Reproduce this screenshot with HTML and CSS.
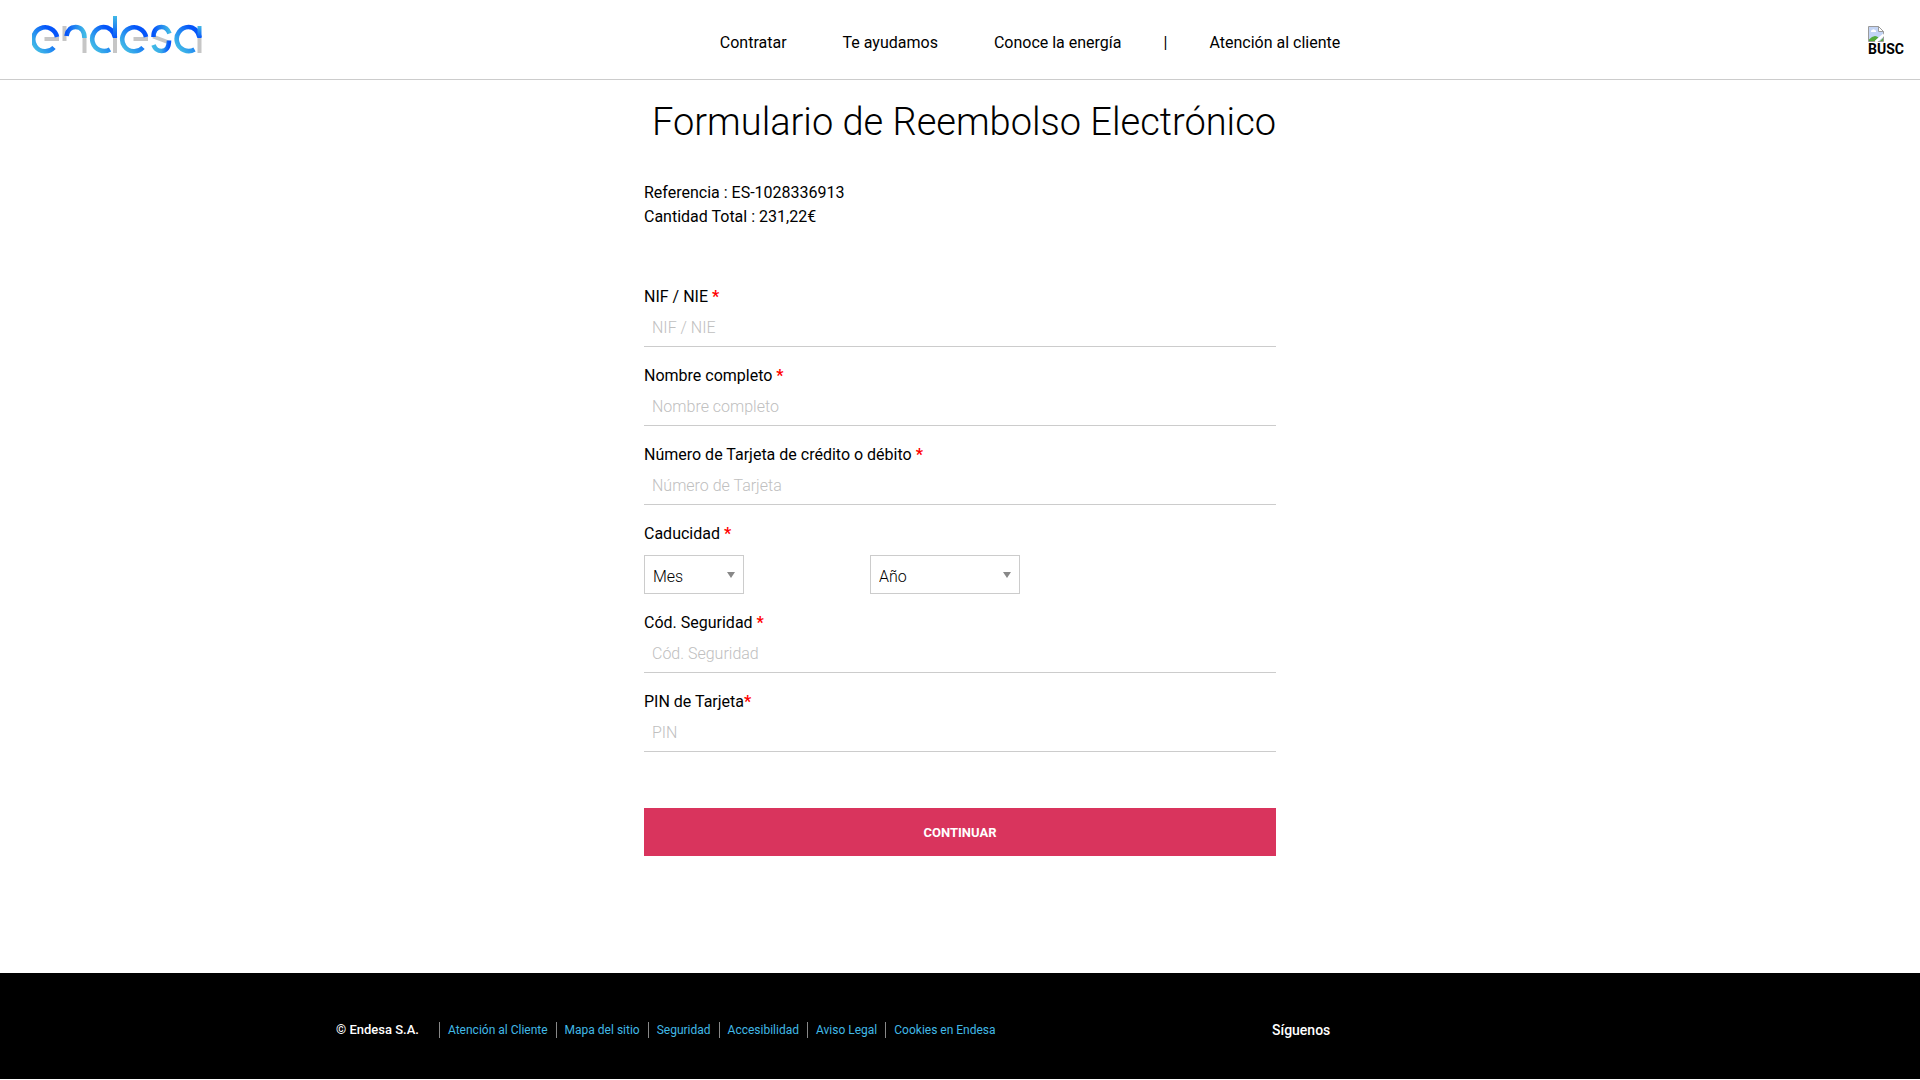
FILE: index.html
```html
<!DOCTYPE html>
<html lang="es">
<head>
<meta charset="utf-8">
<meta name="viewport" content="width=device-width, initial-scale=1">
<title>Formulario de Reembolso Electrónico</title>
<link rel="stylesheet" href="styles.css">
</head>
<body>
<header class="header">
  <a class="logo" href="#" aria-label="endesa">
    <svg width="170" height="38" viewBox="32 16 170 38" fill="none" stroke-width="4.600">
      <defs>
        <linearGradient id="ring" x1="0.1" y1="0.9" x2="0.9" y2="0.2">
          <stop offset="0" stop-color="#41b9e6"/><stop offset="0.4" stop-color="#2690f0"/><stop offset="0.9" stop-color="#0555fa"/>
        </linearGradient>
        <linearGradient id="arch" x1="0" y1="0.5" x2="1" y2="0.5">
          <stop offset="0" stop-color="#0555fa"/><stop offset="1" stop-color="#41b9e6"/>
        </linearGradient>
        <linearGradient id="hook" x1="0" y1="0.5" x2="1" y2="0.5">
          <stop offset="0" stop-color="#41b9e6"/><stop offset="0.5" stop-color="#38aae9"/><stop offset="1" stop-color="#0555fa"/>
        </linearGradient>
        <linearGradient id="stem" x1="0" y1="0" x2="0" y2="1">
          <stop offset="0" stop-color="#41b9e6"/><stop offset="1" stop-color="#0555fa"/>
        </linearGradient>
      </defs>
      <path stroke="#c6c6c6" stroke-width="4" d="M44.500 39H59M64.500 26V41M84.500 38V53M115 38V53M133.500 39H148M153 36.500L169 42.500M199.500 38V53"/>
      <path stroke="url(#ring)" d="M57 37A12 12 0 1 0 54 47.500"/>
      <path stroke="url(#arch)" d="M66.500 36C67.500 29.500 71 27 75.500 27C81 27 84.500 31 84.500 38"/>
      <path stroke="url(#ring)" d="M115 37.500C114 31 109 27 103.500 27A12 12 0 1 0 110 49.500"/>
      <path fill="url(#stem)" d="M113 16H117V38H113Z"/>
      <path stroke="url(#ring)" d="M146 37A12 12 0 1 0 143 47.500"/>
      <path stroke="url(#arch)" d="M153.500 37C153.500 30 157 27 161.500 27C165.500 27 168 29.500 169.500 33.500"/>
      <path stroke="url(#hook)" d="M153.500 45C155 49 157.500 51 161.500 51C166 51 169 47.500 169 40.500"/>
      <path stroke="url(#ring)" d="M199.500 37.500C198.500 31 193.500 27 188.500 27A12 12 0 1 0 194.500 49.500"/>
      <path fill="url(#stem)" d="M197.500 26H201.500V38H197.500Z"/>
    </svg>
  </a>
  <nav class="nav">
    <a href="#">Contratar</a>
    <a href="#">Te ayudamos</a>
    <a href="#">Conoce la energía</a>
    <span class="nav-sep">|</span>
    <a href="#">Atención al cliente</a>
  </nav>
  <button class="search" type="button">
    <svg width="16" height="16" viewBox="0 0 16 16">
      <path fill="#c3d4f5" stroke="#9a9a9a" d="M.5 .5H10.500L15.500 5.500V15.500H.5Z"/>
      <path fill="#fff" stroke="#9a9a9a" d="M10.500 .5V5.500H15.500Z"/>
      <path fill="#fff" d="M3 6a1.500 1.500 0 0 1 1-2a2 2 0 0 1 3 0a1.500 1.500 0 0 1 1 2Z"/>
      <path fill="#54ab3a" d="M1 15V13.500Q4 10 7 10Q9 10 10.500 11.500L7 15ZM12 15L15 12V15Z"/>
      <path stroke="#fff" stroke-width="2.500" d="M7.500 16L16 8.500"/>
    </svg>
    <span>BUSC</span>
  </button>
</header>

<main class="main">
  <h1 class="title">Formulario de Reembolso Electrónico</h1>
  <div class="summary">
    <p>Referencia : ES-1028336913</p>
    <p>Cantidad Total : 231,22€</p>
  </div>
  <form class="form">
    <div class="field">
      <label for="nif">NIF / NIE <span class="req">*</span></label>
      <input id="nif" type="text" placeholder="NIF / NIE">
    </div>
    <div class="field">
      <label for="nombre">Nombre completo <span class="req">*</span></label>
      <input id="nombre" type="text" placeholder="Nombre completo">
    </div>
    <div class="field">
      <label for="tarjeta">Número de Tarjeta de crédito o débito <span class="req">*</span></label>
      <input id="tarjeta" type="text" placeholder="Número de Tarjeta">
    </div>
    <div class="field">
      <label for="mes">Caducidad <span class="req">*</span></label>
      <div class="expiry">
        <select id="mes" class="month"><option>Mes</option></select>
        <select class="year" aria-label="Año"><option>Año</option></select>
      </div>
    </div>
    <div class="field">
      <label for="cvv">Cód. Seguridad <span class="req">*</span></label>
      <input id="cvv" type="text" placeholder="Cód. Seguridad">
    </div>
    <div class="field">
      <label for="pin">PIN de Tarjeta<span class="req">*</span></label>
      <input id="pin" type="text" placeholder="PIN">
    </div>
    <button class="submit" type="submit">CONTINUAR</button>
  </form>
</main>

<footer class="footer">
  <div class="footer-inner">
    <div class="legal">
      <span class="copy">© Endesa S.A.</span>
      <ul class="links">
        <li><a href="#">Atención al Cliente</a></li>
        <li><a href="#">Mapa del sitio</a></li>
        <li><a href="#">Seguridad</a></li>
        <li><a href="#">Accesibilidad</a></li>
        <li><a href="#">Aviso Legal</a></li>
        <li><a href="#">Cookies en Endesa</a></li>
      </ul>
    </div>
    <span class="follow">Síguenos</span>
  </div>
</footer>
</body>
</html>
```
FILE: styles.css
```css
* { box-sizing: border-box; }
body {
  margin: 0;
  background: #fff;
  color: #000;
  font: 16px/24px Roboto, "Liberation Sans", sans-serif;
}
a { color: inherit; text-decoration: none; }
p, h1, ul { margin: 0; padding: 0; }

.header {
  display: grid;
  grid-template-columns: 1fr auto 1fr;
  align-items: start;
  height: 80px;
  padding: 0 16px 0 32px;
  border-bottom: 1px solid #ccc;
}
.logo { padding-top: 16px; }
.logo svg, .search svg { display: block; }
.nav { display: flex; gap: 56px; padding: 31px 0 0 124px; }
.nav-sep { margin: 0 -14px; }
.search {
  justify-self: end;
  margin-top: 26px;
  padding: 0;
  border: 0;
  background: none;
  color: #000;
  text-align: left;
  font: bold 14px/14px Roboto, "Liberation Sans", sans-serif;
}
.search span { display: block; }

.main { width: 632px; max-width: 100%; margin: 0 auto; }
.title {
  padding: 17px 0 0 8px;
  font-weight: 300;
  font-size: 38px;
  line-height: 50px;
  text-align: center;
  white-space: nowrap;
}
.summary { padding-top: 34px; }
.form { padding-top: 56px; }
.field { margin-bottom: 17px; }
.field label { display: block; }
.req { color: #f00; font-weight: bold; }
.field input {
  display: block;
  width: 100%;
  height: 38px;
  padding: 0 8px;
  border: 0;
  border-bottom: 1px solid #ccc;
  background: none;
  font: 300 16px/24px Roboto, "Liberation Sans", sans-serif;
}
.field input::placeholder { color: #c0c0c0; }
.expiry { display: flex; gap: 126px; padding: 9px 0 0; }
.expiry select {
  appearance: none;
  height: 39px;
  padding: 4px 8px 0;
  border: 1px solid #ccc;
  border-radius: 0;
  color: #000;
  background: #fff url("data:image/svg+xml,%3Csvg xmlns='http://www.w3.org/2000/svg' width='8' height='6'%3E%3Cpath fill='%23888' d='M0 0H8L4 6Z'/%3E%3C/svg%3E") no-repeat right 8px top 16px;
  font: 300 16px/24px Roboto, "Liberation Sans", sans-serif;
}
.month { width: 100px; }
.year { width: 150px; }
.submit {
  display: block;
  width: 100%;
  height: 48px;
  margin-top: 56px;
  padding: 2px 0 0;
  border: 0;
  background: #d9345d;
  color: #fff;
  font: bold 13px/24px Roboto, "Liberation Sans", sans-serif;
}

.footer { margin-top: 117px; padding: 49px 0 41px; background: #000; color: #fff; }
.footer-inner {
  display: grid;
  grid-template-columns: 936px 1fr;
  width: 1248px;
  max-width: 100%;
  margin: 0 auto;
  line-height: 16px;
}
.legal { display: flex; gap: 20px; font-size: 12px; }
.copy { font-size: 13px; font-weight: 500; }
.links { display: flex; list-style: none; color: #41b9e6; }
.links li { padding: 0 8px; border-left: 1px solid #888; }
.follow { font-size: 14px; font-weight: 500; }
```
